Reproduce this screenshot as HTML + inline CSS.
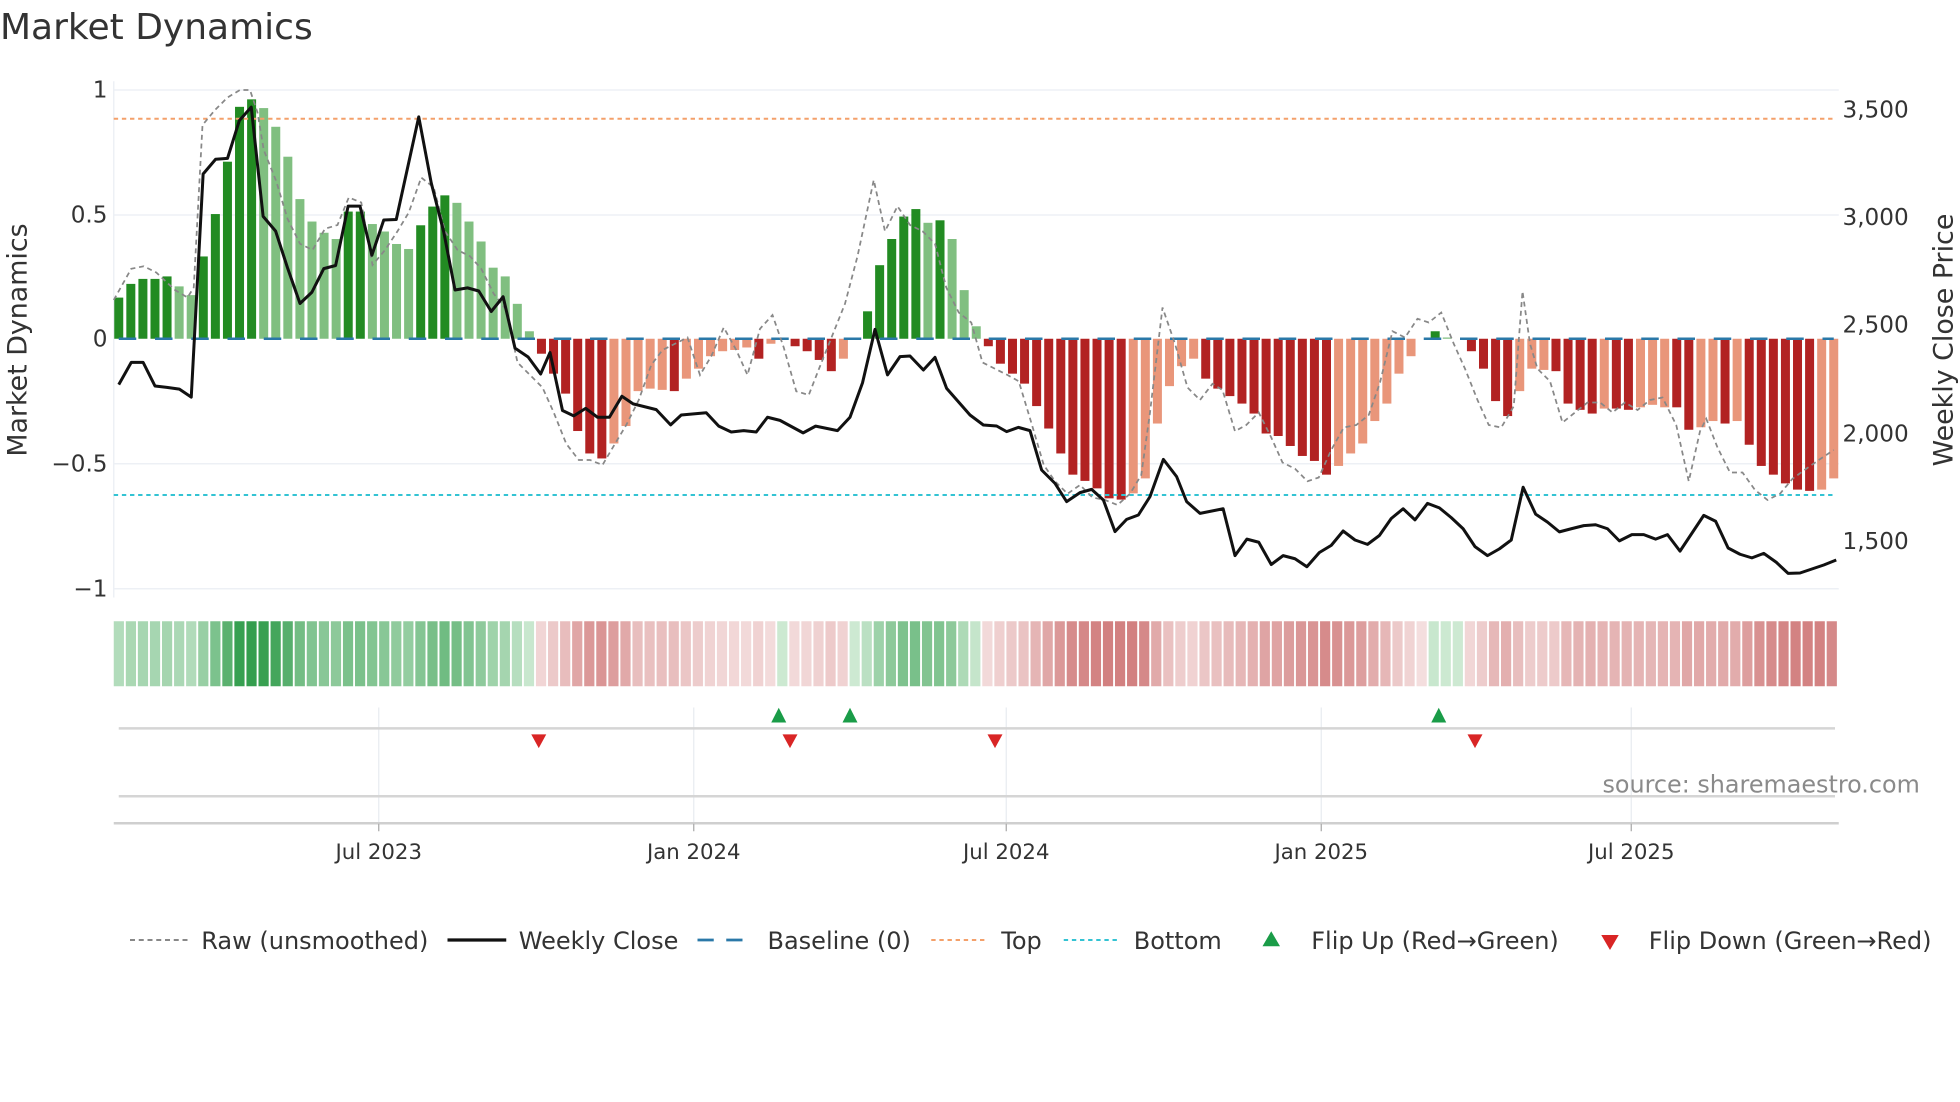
<!DOCTYPE html>
<html><head><meta charset="utf-8"><style>
html,body{margin:0;padding:0;background:#fff;width:1960px;height:1102px;overflow:hidden}
svg{display:block}
text{font-family:"DejaVu Sans","Liberation Sans",sans-serif;fill:#333}
</style></head><body>
<svg id="s" width="1960" height="1102" viewBox="0 0 1568 881.6" xmlns="http://www.w3.org/2000/svg">
<text x="0" y="31" font-size="28.8">Market Dynamics</text>
<g stroke="#edf0f5" stroke-width="1.2">
<line x1="91" y1="72" x2="1471" y2="72"/><line x1="91" y1="172" x2="1471" y2="172"/>
<line x1="91" y1="371" x2="1471" y2="371"/><line x1="91" y1="471" x2="1471" y2="471"/>
<line x1="91" y1="65" x2="91" y2="478"/>
</g>
<g font-size="18.5" text-anchor="end">
<text x="86" y="78">1</text><text x="86" y="178">0.5</text><text x="86" y="277">0</text>
<text x="86" y="377">−0.5</text><text x="86" y="477">−1</text>
</g>
<g font-size="18.5">
<text x="1474" y="94">3,500</text><text x="1474" y="180">3,000</text><text x="1474" y="266">2,500</text>
<text x="1474" y="353">2,000</text><text x="1474" y="439">1,500</text>
</g>
<text transform="translate(21,272) rotate(-90)" font-size="21.5" text-anchor="middle">Market Dynamics</text>
<text transform="translate(1562,272) rotate(-90)" font-size="21.5" text-anchor="middle">Weekly Close Price</text>
<g id="bars"></g>
<line x1="91" y1="95" x2="1467" y2="95" stroke="#f4a06a" stroke-width="1.6" stroke-dasharray="3.5,3"/>
<line x1="91" y1="396" x2="1467" y2="396" stroke="#33c3d3" stroke-width="1.6" stroke-dasharray="3.5,3"/>
<line x1="95" y1="271" x2="1467" y2="271" stroke="#2a78a8" stroke-width="2" stroke-dasharray="14,15"/>
<polyline id="raw" fill="none" stroke="#888" stroke-width="1.4" stroke-dasharray="4,3"/>
<polyline id="close" fill="none" stroke="#111" stroke-width="2.4" stroke-linejoin="round"/>
<g id="heat"></g>
<g stroke="#e8ebf0" stroke-width="1">
<line x1="303" y1="566" x2="303" y2="658"/><line x1="555" y1="566" x2="555" y2="658"/>
<line x1="805" y1="566" x2="805" y2="658"/><line x1="1057" y1="566" x2="1057" y2="658"/>
<line x1="1305" y1="566" x2="1305" y2="658"/>
</g>
<line x1="95" y1="582.7" x2="1468" y2="582.7" stroke="#d5d5d5" stroke-width="2"/>
<line x1="95" y1="637" x2="1468" y2="637" stroke="#d5d5d5" stroke-width="2"/>
<line x1="91" y1="658.6" x2="1471" y2="658.6" stroke="#cfcfcf" stroke-width="2"/>
<g stroke="#aaa" stroke-width="1"><line x1="303" y1="659" x2="303" y2="665"/><line x1="555" y1="659" x2="555" y2="665"/><line x1="805" y1="659" x2="805" y2="665"/><line x1="1057" y1="659" x2="1057" y2="665"/><line x1="1305" y1="659" x2="1305" y2="665"/></g>
<g font-size="17" text-anchor="middle">
<text x="303" y="687">Jul 2023</text><text x="555" y="687">Jan 2024</text><text x="805" y="687">Jul 2024</text>
<text x="1057" y="687">Jan 2025</text><text x="1305" y="687">Jul 2025</text>
</g>
<g fill="#1a9c48"><polygon points="623,566.2 617,578 629,578"/><polygon points="680,566.2 674,578 686,578"/><polygon points="1151,566.2 1145,578 1157,578"/></g>
<g fill="#d92525"><polygon points="431,598.5 425,587.5 437,587.5"/><polygon points="632,598.5 626,587.5 638,587.5"/><polygon points="796,598.5 790,587.5 802,587.5"/><polygon points="1180,598.5 1174,587.5 1186,587.5"/></g>
<text x="1282" y="634" font-size="19.1" style="fill:#8a8a8a">source: sharemaestro.com</text>
<g font-size="19.2">
<line x1="104" y1="752" x2="150" y2="752" stroke="#888" stroke-width="1.6" stroke-dasharray="4,3"/>
<text x="161" y="759">Raw (unsmoothed)</text>
<line x1="358" y1="752" x2="405" y2="752" stroke="#111" stroke-width="2.6"/>
<text x="415" y="759">Weekly Close</text>
<line x1="558" y1="752" x2="602" y2="752" stroke="#2a78a8" stroke-width="2.2" stroke-dasharray="13,10"/>
<text x="614" y="759">Baseline (0)</text>
<line x1="745" y1="752" x2="790" y2="752" stroke="#f4a06a" stroke-width="1.6" stroke-dasharray="3.5,3"/>
<text x="801" y="759">Top</text>
<line x1="851" y1="752" x2="896" y2="752" stroke="#33c3d3" stroke-width="1.6" stroke-dasharray="3.5,3"/>
<text x="907" y="759">Bottom</text>
<polygon points="1017,745 1010,757 1024,757" fill="#1a9c48"/>
<text x="1049" y="759">Flip Up (Red→Green)</text>
<polygon points="1288,760 1281,748 1295,748" fill="#d92525"/>
<text x="1319" y="759">Flip Down (Green→Red)</text>
</g>
</svg>
<script>
(function(){
var NS="http://www.w3.org/2000/svg";
var d="0.165D,.22D,.24D,.24D,.25D,.21L,.175L,.33D,.50D,.71D,.93D,.96D,.925L,.85L,.73L,.56L,.47L,.425L,.40L,.51D,.51D,.46L,.43L,.38L,.36L,.455D,.53D,.575D,.545L,.47L,.39L,.285L,.25L,.14L,.03L,-.06R,-.14R,-.22R,-.37R,-.46R,-.48R,-.42S,-.35S,-.21S,-.20S,-.205S,-.21R,-.16S,-.12S,-.07S,-.05S,-.045S,-.035S,-.08R,-.02S,.005L,-.03R,-.05R,-.085R,-.13R,-.08S,0L,.11D,.295D,.40D,.49D,.52D,.465L,.475D,.40L,.195L,.05L,-.03R,-.10R,-.14R,-.18R,-.27R,-.36R,-.46R,-.545R,-.57R,-.60R,-.64R,-.645R,-.62S,-.56S,-.34S,-.19S,-.11S,-.08S,-.16R,-.20R,-.23R,-.26R,-.30R,-.38R,-.39R,-.43R,-.47R,-.49R,-.545R,-.51S,-.46S,-.42S,-.33S,-.26S,-.14S,-.07S,0S,.03D,.005L,0L,-.05R,-.12R,-.25R,-.31R,-.21S,-.12S,-.125S,-.13R,-.26R,-.285R,-.30R,-.28S,-.28R,-.285R,-.275S,-.265S,-.275S,-.275R,-.365R,-.355S,-.33S,-.34R,-.33S,-.425R,-.51R,-.545R,-.58R,-.605R,-.61R,-.605S,-.56S".split(",");
var n=d.length, sp=(1467-95)/(n-1);
var col={D:"#228b22",L:"#80bf80",R:"#b22222",S:"#e9967a"};
var bars=document.getElementById("bars"), heat=document.getElementById("heat");
var cw=1380/n;
function mix(a,b,t){return "rgb("+a.map(function(v,i){return Math.round(v+(b[i]-v)*t)}).join(",")+")";}
for(var i=0;i<n;i++){
 var c=d[i].slice(-1), v=parseFloat(d[i]); var x=95+i*sp;
 if(Math.abs(v)>0.001){
  var r=document.createElementNS(NS,"rect");
  var y0=271, h=Math.abs(v)*199.5;
  r.setAttribute("x",x-3.6);r.setAttribute("width",7.2);
  r.setAttribute("y",v>0?y0-h:y0);r.setAttribute("height",h);
  r.setAttribute("fill",col[c]);bars.appendChild(r);
 }
 var hr=document.createElementNS(NS,"rect");
 hr.setAttribute("x",91+i*cw);hr.setAttribute("width",cw-1.5);
 hr.setAttribute("y",497);hr.setAttribute("height",52);
 var f;
 if(c=="D"||c=="L"){f=mix([205,233,210],[52,158,78],Math.min(1,v/0.95));}
 else{f=mix([244,222,222],[210,128,128],Math.min(1,Math.abs(v)/0.62));}
 hr.setAttribute("fill",f);heat.appendChild(hr);
}
var z1=[[190,862],[210,812],[229,812],[248,865],[267,868],[287,872],[306,890],[325,390],[345,357],[364,355],[383,270],[402,240],[421,485],[441,518],[460,600],[480,680],[499,655],[518,602],[537,595],[557,462],[576,462],[595,572],[614,493],[634,492],[670,262],[690,410],[710,520],[728,650],[748,645],[766,652],[786,698],[805,665],[824,780],[845,800],[865,838],[880,790],[900,920],[918,932],[937,915],[956,935],[975,935],[995,888],[1013,905],[1050,918],[1073,952],[1090,930],[1130,925],[1150,955],[1170,968],[1190,965],[1210,968],[1228,935],[1248,942],[1285,970],[1305,955],[1340,965],[1360,935],[1380,858],[1400,738],[1420,840]];
var pts=z1.map(function(p){return [p[0]/2,p[1]*0.357]});
var z4=[[0,170],[30,168],[70,210],[105,172],[140,265],[210,345],[250,375],[290,378],[320,395],[355,382],[390,392],[425,510],[465,550],[500,605],[540,578],[575,568],[610,600],[645,695],[680,658],[715,645],[750,590],[790,478],[830,530],[860,605],[900,640]];
z4.forEach(function(p){pts.push([(900+p[0]/3)/1.25,(300+p[1]/3)/1.25])});
var z2=[[389,1140],[408,1245],[427,1208],[446,1215],[466,1265],[485,1245],[504,1252],[523,1270],[543,1238],[562,1222],[581,1190],[600,1210],[620,1220],[639,1200],[658,1162],[677,1140],[696,1165],[716,1128],[735,1138],[754,1160],[773,1185],[792,1225],[812,1245],[831,1230],[850,1210],[869,1092],[889,1152],[908,1170],[927,1192],[946,1185],[966,1178],[985,1176],[1004,1185],[1023,1212],[1043,1198],[1062,1198],[1081,1208],[1100,1198],[1120,1235],[1139,1195],[1158,1155],[1177,1168],[1197,1228],[1216,1242],[1235,1250],[1254,1240],[1274,1260],[1293,1285],[1312,1284],[1331,1275],[1350,1266],[1370,1255]];
z2.forEach(function(p){pts.push([784+p[0]/2,p[1]*0.357])});
pts.sort(function(a,b){return a[0]-b[0]});
document.getElementById("close").setAttribute("points",pts.map(function(p){return p[0].toFixed(1)+","+p[1].toFixed(1)}).join(" "));
var raw=[[91,240],[105,215],[115,213],[125,218],[140,232],[150,238],[155,230],[162,100],[172,88],[182,78],[192,72],[200,72],[206,90],[211,120],[221,145],[230,175],[240,195],[250,200],[260,183],[270,180],[279,158],[289,162],[298,212],[308,200],[318,185],[327,170],[337,142],[347,150],[356,185],[366,200],[376,205],[385,215],[395,235],[405,248],[414,290],[424,300],[434,310],[443,330],[453,355],[463,368],[472,368],[482,372],[492,355],[501,340],[511,320],[521,292],[530,280],[540,275],[550,270],[560,300],[569,285],[579,262],[589,280],[598,300],[608,263],[618,252],[627,278],[637,313],[647,316],[656,293],[666,268],[676,243],[686,205],[699,144],[708,185],[718,165],[728,180],[738,185],[748,195],[757,230],[767,250],[777,258],[786,290],[796,295],[806,300],[815,305],[825,338],[835,372],[844,385],[854,395],[864,388],[874,398],[884,400],[894,404],[904,395],[913,380],[920,330],[930,246],[940,275],[950,310],[960,320],[970,307],[978,312],[988,345],[997,340],[1007,330],[1017,350],[1026,370],[1036,375],[1046,385],[1055,382],[1065,360],[1075,342],[1085,340],[1095,332],[1104,306],[1114,265],[1124,270],[1134,255],[1143,258],[1153,250],[1163,275],[1172,295],[1182,320],[1191,340],[1201,342],[1211,325],[1218,233],[1224,275],[1230,295],[1240,305],[1250,338],[1260,330],[1270,322],[1280,322],[1290,330],[1300,322],[1310,328],[1320,320],[1330,318],[1341,340],[1351,385],[1360,345],[1365,335],[1374,358],[1384,378],[1394,378],[1404,392],[1414,400],[1424,395],[1434,383],[1445,375],[1455,368],[1467,360]];
document.getElementById("raw").setAttribute("points",raw.map(function(p){return p.join(",")}).join(" "));
})();
</script>
</body></html>
